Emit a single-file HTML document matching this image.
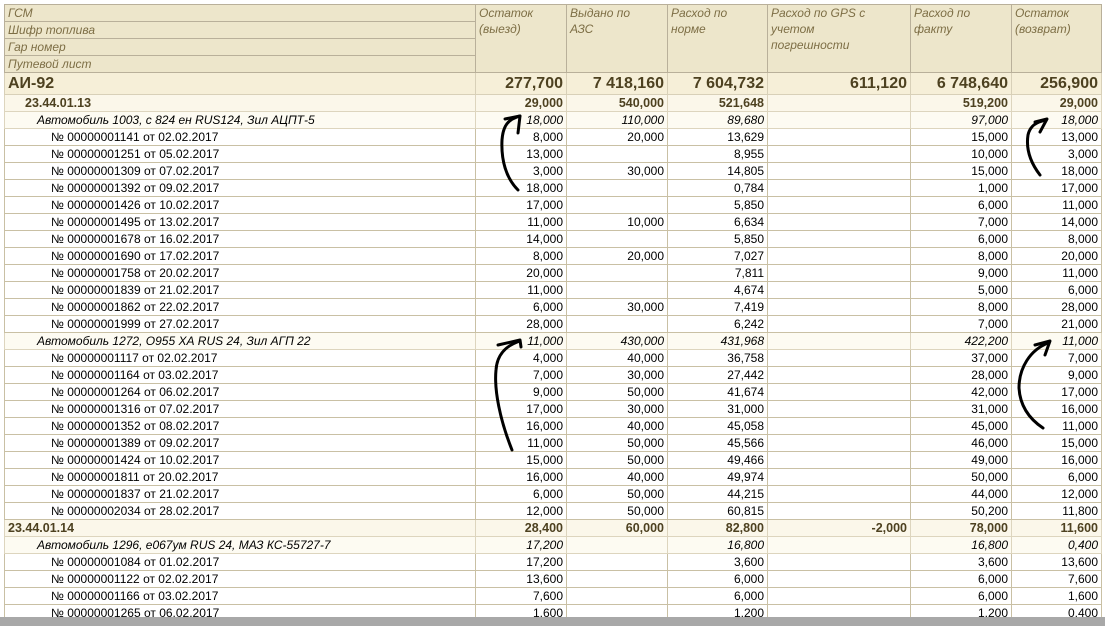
<!DOCTYPE html>
<html><head><meta charset="utf-8"><style>
body{margin:0;width:1105px;height:626px;overflow:hidden;background:#fff;font-family:"Liberation Sans",Arial,sans-serif;position:relative}
table{position:absolute;left:4px;top:4px;border-collapse:collapse;table-layout:fixed;font-size:12px}
td{border:1px solid #c9c0a4;padding:0 3px;height:16px;line-height:16px;white-space:nowrap;overflow:hidden;text-align:right;color:#000}
td:first-child{text-align:left}
.h td{background:#ede6cb;color:#7d6e45;font-style:italic;vertical-align:top;text-align:left;border-color:#b9b09a}
.t td{background:#f6efd8;color:#4d4120;font-weight:bold;font-size:16px;height:21px;line-height:21px;border-color:#d8d0b8}
.g td{background:#fbf7ea;color:#4d4120;font-weight:bold;font-size:12.5px;border-color:#ddd5be}
.g td:first-child{padding-left:20px}
.a td{background:#fdfbf2;font-style:italic;border-color:#ddd5be}
.a td:first-child{padding-left:32px}
.r td:first-child{padding-left:46px}
.bar{position:absolute;left:0;top:617px;width:1105px;height:9px;background:#a8a8a8}
</style></head><body>
<table>
<colgroup><col style="width:471px"><col style="width:91px"><col style="width:101px"><col style="width:100px"><col style="width:143px"><col style="width:101px"><col style="width:90px"></colgroup>
<tr class="h"><td>ГСМ</td><td rowspan="4" style="line-height:16px">Остаток<br>(выезд)</td><td rowspan="4">Выдано по<br>АЗС</td><td rowspan="4">Расход по<br>норме</td><td rowspan="4">Расход по GPS с<br>учетом<br>погрешности</td><td rowspan="4">Расход по<br>факту</td><td rowspan="4">Остаток<br>(возврат)</td></tr>
<tr class="h"><td>Шифр топлива</td></tr>
<tr class="h"><td>Гар номер</td></tr>
<tr class="h"><td>Путевой лист</td></tr>
<tr class="t"><td>АИ-92</td><td>277,700</td><td>7 418,160</td><td>7 604,732</td><td>611,120</td><td>6 748,640</td><td>256,900</td></tr>
<tr class="g"><td>23.44.01.13</td><td>29,000</td><td>540,000</td><td>521,648</td><td></td><td>519,200</td><td>29,000</td></tr>
<tr class="a"><td>Автомобиль 1003, с 824 ен RUS124, Зил АЦПТ-5</td><td>18,000</td><td>110,000</td><td>89,680</td><td></td><td>97,000</td><td>18,000</td></tr>
<tr class="r"><td>№ 00000001141 от 02.02.2017</td><td>8,000</td><td>20,000</td><td>13,629</td><td></td><td>15,000</td><td>13,000</td></tr>
<tr class="r"><td>№ 00000001251 от 05.02.2017</td><td>13,000</td><td></td><td>8,955</td><td></td><td>10,000</td><td>3,000</td></tr>
<tr class="r"><td>№ 00000001309 от 07.02.2017</td><td>3,000</td><td>30,000</td><td>14,805</td><td></td><td>15,000</td><td>18,000</td></tr>
<tr class="r"><td>№ 00000001392 от 09.02.2017</td><td>18,000</td><td></td><td>0,784</td><td></td><td>1,000</td><td>17,000</td></tr>
<tr class="r"><td>№ 00000001426 от 10.02.2017</td><td>17,000</td><td></td><td>5,850</td><td></td><td>6,000</td><td>11,000</td></tr>
<tr class="r"><td>№ 00000001495 от 13.02.2017</td><td>11,000</td><td>10,000</td><td>6,634</td><td></td><td>7,000</td><td>14,000</td></tr>
<tr class="r"><td>№ 00000001678 от 16.02.2017</td><td>14,000</td><td></td><td>5,850</td><td></td><td>6,000</td><td>8,000</td></tr>
<tr class="r"><td>№ 00000001690 от 17.02.2017</td><td>8,000</td><td>20,000</td><td>7,027</td><td></td><td>8,000</td><td>20,000</td></tr>
<tr class="r"><td>№ 00000001758 от 20.02.2017</td><td>20,000</td><td></td><td>7,811</td><td></td><td>9,000</td><td>11,000</td></tr>
<tr class="r"><td>№ 00000001839 от 21.02.2017</td><td>11,000</td><td></td><td>4,674</td><td></td><td>5,000</td><td>6,000</td></tr>
<tr class="r"><td>№ 00000001862 от 22.02.2017</td><td>6,000</td><td>30,000</td><td>7,419</td><td></td><td>8,000</td><td>28,000</td></tr>
<tr class="r"><td>№ 00000001999 от 27.02.2017</td><td>28,000</td><td></td><td>6,242</td><td></td><td>7,000</td><td>21,000</td></tr>
<tr class="a"><td>Автомобиль 1272, О955 ХА RUS 24, Зил АГП 22</td><td>11,000</td><td>430,000</td><td>431,968</td><td></td><td>422,200</td><td>11,000</td></tr>
<tr class="r"><td>№ 00000001117 от 02.02.2017</td><td>4,000</td><td>40,000</td><td>36,758</td><td></td><td>37,000</td><td>7,000</td></tr>
<tr class="r"><td>№ 00000001164 от 03.02.2017</td><td>7,000</td><td>30,000</td><td>27,442</td><td></td><td>28,000</td><td>9,000</td></tr>
<tr class="r"><td>№ 00000001264 от 06.02.2017</td><td>9,000</td><td>50,000</td><td>41,674</td><td></td><td>42,000</td><td>17,000</td></tr>
<tr class="r"><td>№ 00000001316 от 07.02.2017</td><td>17,000</td><td>30,000</td><td>31,000</td><td></td><td>31,000</td><td>16,000</td></tr>
<tr class="r"><td>№ 00000001352 от 08.02.2017</td><td>16,000</td><td>40,000</td><td>45,058</td><td></td><td>45,000</td><td>11,000</td></tr>
<tr class="r"><td>№ 00000001389 от 09.02.2017</td><td>11,000</td><td>50,000</td><td>45,566</td><td></td><td>46,000</td><td>15,000</td></tr>
<tr class="r"><td>№ 00000001424 от 10.02.2017</td><td>15,000</td><td>50,000</td><td>49,466</td><td></td><td>49,000</td><td>16,000</td></tr>
<tr class="r"><td>№ 00000001811 от 20.02.2017</td><td>16,000</td><td>40,000</td><td>49,974</td><td></td><td>50,000</td><td>6,000</td></tr>
<tr class="r"><td>№ 00000001837 от 21.02.2017</td><td>6,000</td><td>50,000</td><td>44,215</td><td></td><td>44,000</td><td>12,000</td></tr>
<tr class="r"><td>№ 00000002034 от 28.02.2017</td><td>12,000</td><td>50,000</td><td>60,815</td><td></td><td>50,200</td><td>11,800</td></tr>
<tr class="g"><td style="padding-left:3px">23.44.01.14</td><td>28,400</td><td>60,000</td><td>82,800</td><td>-2,000</td><td>78,000</td><td>11,600</td></tr>
<tr class="a"><td>Автомобиль 1296, е067ум RUS 24, МАЗ КС-55727-7</td><td>17,200</td><td></td><td>16,800</td><td></td><td>16,800</td><td>0,400</td></tr>
<tr class="r"><td>№ 00000001084 от 01.02.2017</td><td>17,200</td><td></td><td>3,600</td><td></td><td>3,600</td><td>13,600</td></tr>
<tr class="r"><td>№ 00000001122 от 02.02.2017</td><td>13,600</td><td></td><td>6,000</td><td></td><td>6,000</td><td>7,600</td></tr>
<tr class="r"><td>№ 00000001166 от 03.02.2017</td><td>7,600</td><td></td><td>6,000</td><td></td><td>6,000</td><td>1,600</td></tr>
<tr class="r"><td>№ 00000001265 от 06.02.2017</td><td>1,600</td><td></td><td>1,200</td><td></td><td>1,200</td><td>0,400</td></tr>
</table>
<div class="bar"></div>
<svg width="1105" height="626" style="position:absolute;left:0;top:0" fill="none" stroke="#000" stroke-width="3" stroke-linecap="round" stroke-linejoin="round">
<path d="M518,190 C506,178 501,160 502,140 C503,126 508,119 520,116"/>
<path d="M505,119 L520,116 L518,133"/>
<path d="M512,450 C500,420 494,390 496,370 C497,355 505,346 520,341"/>
<path d="M498,345 L520,340 L521,347"/>
<path d="M1040,175 C1030,162 1026,148 1028,135 C1030,126 1036,122 1046,120"/>
<path d="M1035,122 L1047,119 L1040,132"/>
<path d="M1043,428 C1028,418 1020,405 1019,388 C1019,368 1030,350 1048,343"/>
<path d="M1035,345 L1050,341 L1045,355"/>
</svg>
</body></html>
